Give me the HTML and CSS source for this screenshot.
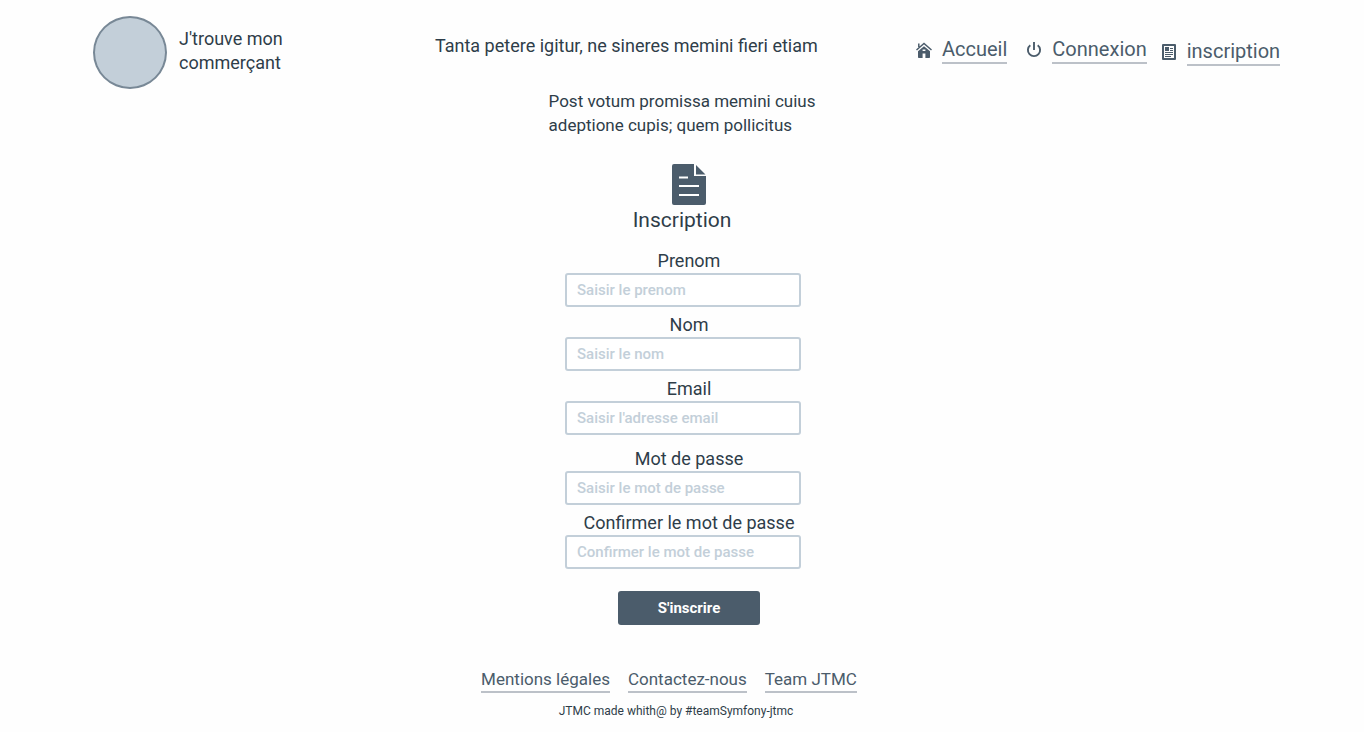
FILE: index.html
```html
<!DOCTYPE html>
<html lang="fr">
<head>
<meta charset="utf-8">
<meta name="viewport" content="width=device-width, initial-scale=1">
<title>Inscription - J'trouve mon commerçant</title>
<link rel="stylesheet" href="styles.css">
</head>
<body>
<header class="header">
  <div class="brand">
    <div class="logo"></div>
    <p class="brand-name">J'trouve mon<br>commerçant</p>
  </div>
  <p class="tagline">Tanta petere igitur, ne sineres memini fieri etiam</p>
  <nav class="nav">
    <div class="nav-item">
      <svg class="nav-icon" viewBox="0 0 16 16" aria-hidden="true"><path d="M.5 8 8 1.500 15.500 8M2.800 5V1.500" fill="none" stroke="currentColor" stroke-width="1.500"/><path fill="currentColor" fill-rule="evenodd" d="M8 4.200 14 9.300V15.200Q14 16 13.200 16H2.800Q2 16 2 15.200V9.300ZM6.600 7.600V9H9.400V7.600ZM6.600 11.500V16H9.400V11.500Z"/></svg>
      <a class="link nav-link" href="#">Accueil</a>
    </div>
    <div class="nav-item nav-login">
      <svg class="nav-icon" viewBox="0 0 16 16" aria-hidden="true"><path d="M8 0V8M4.300 3.200A6.100 6.100 0 1 0 11.700 3.200" fill="none" stroke="currentColor" stroke-width="1.900"/></svg>
      <a class="link nav-link" href="#">Connexion</a>
    </div>
    <div class="nav-item nav-register">
      <svg class="nav-icon" viewBox="0 0 16 16" aria-hidden="true"><path fill="currentColor" fill-rule="evenodd" d="M2 0H14Q15 0 15 1V15Q15 16 14 16H2Q1 16 1 15V1Q1 0 2 0ZM3 2V14H13V2Z"/><path fill="currentColor" d="M4 3H8V7H4ZM9 4H12V5H9ZM9 6H12V7H9ZM4 8H12V9H4ZM4 10H12V11H4ZM4 12H10V13H4Z"/></svg>
      <a class="link nav-link" href="#">inscription</a>
    </div>
  </nav>
</header>
<main class="main">
  <p class="intro">Post votum promissa memini cuius<br>adeptione cupis; quem pollicitus</p>
  <svg class="doc-icon" viewBox="0 0 34 41" aria-hidden="true"><path fill="currentColor" d="M2 0H22V12H34V39Q34 41 32 41H2Q0 41 0 39V2Q0 0 2 0ZM24 1 33.500 10.500H24Z"/><path d="M7 13.500H16M7 22H27M7 31H27" stroke="#fff" stroke-width="1.800" fill="none"/></svg>
  <h1 class="title">Inscription</h1>
  <form class="form">
    <div class="field">
      <label class="label" for="prenom">Prenom</label>
      <input class="input" id="prenom" type="text" placeholder="Saisir le prenom">
    </div>
    <div class="field">
      <label class="label" for="nom">Nom</label>
      <input class="input" id="nom" type="text" placeholder="Saisir le nom">
    </div>
    <div class="field">
      <label class="label" for="email">Email</label>
      <input class="input" id="email" type="email" placeholder="Saisir l'adresse email">
    </div>
    <div class="field field-group">
      <label class="label" for="passe">Mot de passe</label>
      <input class="input" id="passe" type="password" placeholder="Saisir le mot de passe">
    </div>
    <div class="field">
      <label class="label" for="confirmation">Confirmer le mot de passe</label>
      <input class="input" id="confirmation" type="password" placeholder="Confirmer le mot de passe">
    </div>
    <button class="submit" type="submit">S'inscrire</button>
  </form>
</main>
<footer class="footer">
  <div class="footer-links">
    <a class="link" href="#">Mentions légales</a>
    <a class="link" href="#">Contactez-nous</a>
    <a class="link" href="#">Team JTMC</a>
  </div>
  <p class="credit">JTMC made whith@ by #teamSymfony-jtmc</p>
</footer>
</body>
</html>
```

FILE: styles.css
```css
* { box-sizing: border-box; }
body {
  margin: 0;
  background: #fefefe;
  color: #2e3d49;
  font: 18px/24px Roboto, "Liberation Sans", sans-serif;
}
p, h1 { margin: 0; }
.header {
  display: grid;
  grid-template-columns: 342fr 481fr 368fr;
  padding: 16px 80px 0 93px;
}
.brand { display: flex; gap: 12px; }
.logo {
  width: 74px;
  height: 73px;
  flex: none;
  border: 2px solid #788896;
  border-radius: 50%;
  background: #c3cfd9;
}
.brand-name { padding-top: 11px; white-space: nowrap; }
.tagline { padding-top: 18px; white-space: nowrap; }
.nav {
  display: flex;
  align-items: flex-start;
  padding-top: 20px;
}
.nav-item { display: flex; gap: 10px; color: #4b5c6b; }
.nav-icon { width: 16px; height: 16px; margin-top: 6px; }
.nav-login { margin-left: 19px; }
.nav-register { margin-left: 14px; padding-top: 2px; }
.link {
  color: #4b5c6b;
  text-decoration: none;
  border-bottom: 2px solid #bcc1c8;
}
.nav-link { font-size: 20px; line-height: 26px; }
.main { display: flex; flex-direction: column; align-items: center; }
.intro { font-size: 17px; white-space: nowrap; }
.doc-icon {
  width: 34px;
  height: 41px;
  margin: 27px 0 0 14px;
  color: #4b5c6b;
}
.title { font-size: 21px; line-height: 30px; font-weight: 400; }
.form {
  width: 236px;
  margin: 14px 0 0 2px;
  display: flex;
  flex-direction: column;
  gap: 6px;
}
.field { display: flex; flex-direction: column; }
.field-group { margin-top: 6px; }
.label { padding-left: 12px; text-align: center; white-space: nowrap; }
.input {
  width: 100%;
  height: 34px;
  padding: 0 10px;
  border: 2px solid #c3cfd9;
  border-radius: 3px;
  background: #fff;
  color: #2e3d49;
  font: 500 15px/20px Roboto, "Liberation Sans", sans-serif;
}
.input::placeholder { color: #c3cfd9; opacity: 1; }
.submit {
  width: 142px;
  height: 34px;
  align-self: center;
  margin: 16px 0 0 12px;
  border: 0;
  border-radius: 3px;
  background: #4b5c6b;
  color: #fff;
  font: 700 15px/20px Roboto, "Liberation Sans", sans-serif;
}
.footer { padding-top: 42px; text-align: center; }
.footer-links {
  display: flex;
  justify-content: center;
  gap: 18px;
  padding-right: 26px;
  font-size: 17px;
}
.credit { padding: 6px 12px 8px 0; font-size: 12px; line-height: 24px; }
```
